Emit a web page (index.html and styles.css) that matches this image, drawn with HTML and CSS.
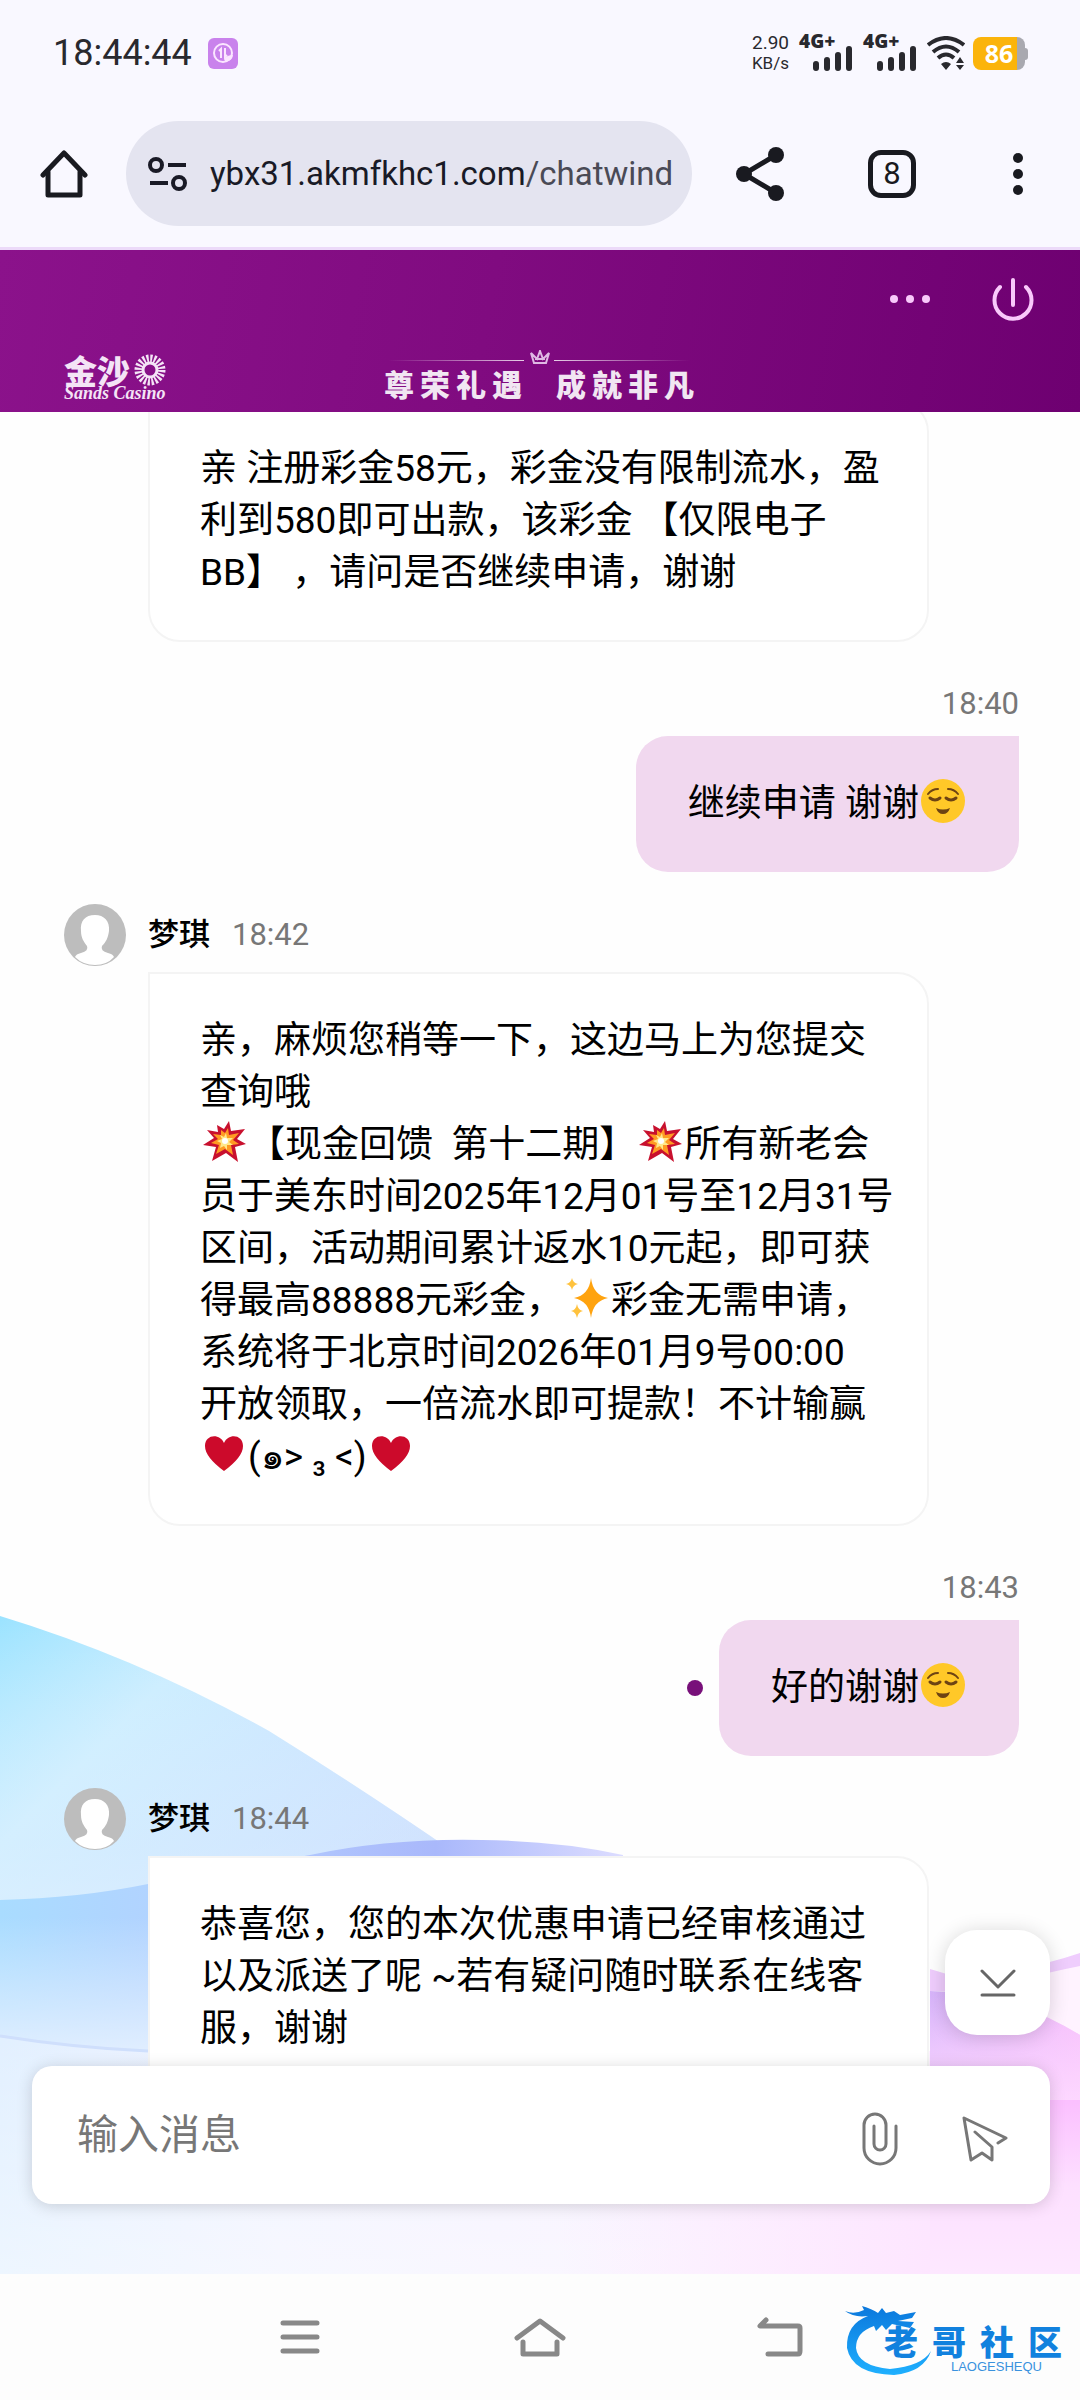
FILE: index.html
```html
<!DOCTYPE html>
<html lang="zh-CN">
<head>
<meta charset="utf-8">
<meta name="viewport" content="width=device-width, initial-scale=1">
<title>在线客服</title>
<link rel="stylesheet" href="styles.css">
</head>
<body>
<svg class="defs" width="0" height="0" aria-hidden="true">
  <symbol id="face" viewBox="0 0 46 46">
    <circle cx="23" cy="23" r="22" fill="#ffc828"/>
    <g fill="none" stroke="#6d4313" stroke-width="2" stroke-linecap="round">
      <path d="M8 16Q12 11 18 11M38 16Q34 11 28 11"/>
      <path d="M10 20Q15 24 20 20M26 20Q31 24 36 20" stroke-width="3"/>
    </g>
    <path d="M16 30Q23 33 30 30Q28 36 23 36Q18 36 16 30Z" fill="#6d4313"/>
  </symbol>
  <symbol id="boom" viewBox="0 0 46 46">
    <path d="M28 2L30 12L44 10L36 20L45 25L34 28L37 43L25 34L11 42L15 28L2 26L13 19L6 11L17 13L16 6L23 10Z" fill="#c8102e"/>
    <path d="M27 9L28 16L38 14L32 21L38 25L30 26L32 36L24 30L15 35L18 26L10 24L17 20L12 15L20 16L20 11L24 14Z" fill="#ff9a22"/>
    <path d="M25 14L26 19L32 19L28 23L32 26L26 26L26 31L23 27L19 29L20 24L16 22L21 20L19 16L23 18Z" fill="#ffe98a"/>
    <circle cx="24" cy="22" r="3" fill="#fff"/>
  </symbol>
  <symbol id="sparkles" viewBox="0 0 46 46">
    <path d="M27 3Q29 20 44 23Q29 26 27 43Q25 26 10 23Q25 20 27 3Z" fill="#ffa30f"/>
    <path d="M8 3Q9 8 14 9Q9 10 8 15Q7 10 2 9Q7 8 8 3ZM13 29Q14 35 19 36Q14 37 13 43Q12 37 7 36Q12 35 13 29Z" fill="#ffc23d"/>
  </symbol>
  <symbol id="heart" viewBox="0 0 46 46">
    <path d="M23 40Q4 26 4 15C4 3 19 2 23 12C27 2 42 3 42 15Q42 26 23 40Z" fill="#cc0a2b"/>
  </symbol>
  <symbol id="avatar" viewBox="0 0 63 63">
    <circle cx="32" cy="32" r="31" fill="#bdbdbd"/>
    <path d="M32 12C22 12 17 18 18 28C18 35 21 39 24 43Q26 48 18 50Q13 51 12 54Q20 62 32 62Q44 62 51 54Q50 51 45 50Q37 48 39 43C43 39 45 35 46 28C47 18 41 12 32 12Z" fill="#fff"/>
  </symbol>
  <symbol id="signal" viewBox="0 0 56 38">
    <g stroke="#29292e" stroke-width="6" stroke-linecap="round">
      <path d="M17 30V34M28 26V34M39 21V34M50 15V34"/>
    </g>
  </symbol>
</svg>

<div class="phone">
  <div class="statusbar">
    <span class="clock">18:44:44</span>
    <svg class="app-badge" viewBox="0 0 30 31">
      <rect width="30" height="31" rx="6" fill="#c982ec"/>
      <circle cx="15" cy="15" r="9" fill="none" stroke="#fbe6ff" stroke-width="2"/>
      <path d="M11 13L13 11V20M17 10V19L19 17" fill="none" stroke="#fbe6ff" stroke-width="2"/>
      <path d="M16 21Q19 17 25 17Q24 24 17 23Z" fill="#fbe6ff"/>
    </svg>
    <div class="speed"><span class="speed-value">2.90</span><span class="speed-unit">KB/s</span></div>
    <div class="cell"><b class="cell-type">4G+</b><svg class="cell-bars"><use href="#signal"/></svg></div>
    <div class="cell"><b class="cell-type">4G+</b><svg class="cell-bars"><use href="#signal"/></svg></div>
    <svg class="wifi" viewBox="0 0 38 34">
      <g fill="none" stroke="#29292e" stroke-width="4">
        <path d="M1 9Q19 -5 37 9M6 16Q19 5 32 16M11 22Q19 15 27 22"/>
      </g>
      <path d="M14 28Q19 24 24 28L19 34ZM29 27L33 21L37 27ZM29 29L33 34L37 29Z" fill="#29292e"/>
    </svg>
    <div class="battery"><b>86</b></div>
  </div>

  <div class="toolbar">
    <button class="tool home" aria-label="主页">
      <svg width="48" height="50" viewBox="0 0 48 50" fill="none" stroke="#191a20" stroke-width="5" stroke-linecap="round" stroke-linejoin="round">
        <path d="M3 26L24 4L45 26"/><path d="M8 23V46H40V23"/>
      </svg>
    </button>
    <button class="address">
      <svg class="tune" width="40" height="36" viewBox="0 0 40 36" fill="none" stroke="#191a26" stroke-width="4">
        <circle cx="8" cy="9" r="6"/><path d="M20 9H38"/><circle cx="31" cy="27" r="6"/><path d="M2 27H20"/>
      </svg>
      <span class="url">ybx31.akmfkhc1.com<span class="path">/chatwind</span></span>
    </button>
    <button class="tool share" aria-label="分享">
      <svg width="48" height="54" viewBox="0 0 48 54">
        <path d="M40 8L8 27L40 46" fill="none" stroke="#191a20" stroke-width="5"/>
        <g fill="#191a20"><circle cx="40" cy="8" r="8"/><circle cx="8" cy="27" r="8"/><circle cx="40" cy="46" r="8"/></g>
      </svg>
    </button>
    <button class="tabs" aria-label="标签页">8</button>
    <button class="tool more" aria-label="更多">
      <svg width="12" height="44" viewBox="0 0 12 44" fill="#191a20"><circle cx="6" cy="6" r="5"/><circle cx="6" cy="22" r="5"/><circle cx="6" cy="38" r="5"/></svg>
    </button>
  </div>

  <header class="banner">
    <div class="banner-actions">
      <button class="tool" aria-label="菜单">
        <svg width="40" height="10" viewBox="0 0 40 10" fill="#f9c9fb"><circle cx="4" cy="5" r="4"/><circle cx="20" cy="5" r="4"/><circle cx="36" cy="5" r="4"/></svg>
      </button>
      <button class="tool" aria-label="退出">
        <svg width="42" height="44" viewBox="0 0 42 44" fill="none" stroke="#f9c9fb" stroke-width="4" stroke-linecap="round"><path d="M21 3V28M8 10A18.500 18.500 0 1 0 34 10"/></svg>
      </button>
    </div>
    <div class="brandline">
      <div class="logo">
        <div class="logo-top">
          <span class="logo-zh">金沙</span>
          <svg width="32" height="32" viewBox="-16 -16 32 32" fill="none" stroke="#f4e4f6">
            <circle r="11" stroke-width="9" stroke-dasharray="2 1.450"/>
            <circle r="7" stroke-width="3"/>
          </svg>
        </div>
        <span class="logo-en">Sands Casino</span>
      </div>
      <div class="slogan">
        <svg class="slogan-rule" viewBox="0 0 312 14">
          <defs>
            <linearGradient id="ruleL"><stop offset="0" stop-color="#fff" stop-opacity="0"/><stop offset="1" stop-color="#fff" stop-opacity=".8"/></linearGradient>
            <linearGradient id="ruleR"><stop offset="0" stop-color="#fff" stop-opacity=".8"/><stop offset="1" stop-color="#fff" stop-opacity="0"/></linearGradient>
          </defs>
          <rect x="4" y="10" width="136" height="1" fill="url(#ruleL)"/>
          <rect x="170" y="10" width="136" height="1" fill="url(#ruleR)"/>
          <path d="M147 3L150 13H162L165 3L159 9L156 1L153 9ZM151 9H161" fill="none" stroke="#dfb9e4" stroke-width="2"/>
        </svg>
        <div class="slogan-text">
          <span>尊</span><span>荣</span><span>礼</span><span>遇</span>
          <span class="second">成</span><span>就</span><span>非</span><span>凡</span>
        </div>
      </div>
    </div>
  </header>

  <main class="chat">
    <svg class="waves" viewBox="0 0 1080 700" preserveAspectRatio="none" aria-hidden="true">
      <defs>
        <linearGradient id="w1" x1="0" y1="0" x2="1" y2="1"><stop offset="0" stop-color="#9be3ff"/><stop offset=".25" stop-color="#c8ecff"/><stop offset=".6" stop-color="#c4deff"/><stop offset="1" stop-color="#c3ccfb"/></linearGradient>
        <linearGradient id="fade" x1="0" y1="0" x2="0" y2="1"><stop offset="0" stop-color="#fff" stop-opacity="0"/><stop offset=".5" stop-color="#e6f3ff" stop-opacity=".4"/><stop offset="1" stop-color="#e3f2ff"/></linearGradient>
        <linearGradient id="w2" x1="0" y1="0" x2="1" y2="0"><stop offset="0" stop-color="#a9dcff"/><stop offset=".35" stop-color="#b5cfff"/><stop offset=".7" stop-color="#a9b8fb"/><stop offset="1" stop-color="#dcdcff"/></linearGradient>
        <linearGradient id="w2f" x1="0" y1="0" x2="0" y2="1"><stop offset=".1" stop-color="#e2efff" stop-opacity="0"/><stop offset=".9" stop-color="#e2efff"/></linearGradient>
        <linearGradient id="w3" x1="0" y1="0" x2="1" y2="0"><stop offset="0" stop-color="#e2f0ff"/><stop offset=".3" stop-color="#f1f3ff"/><stop offset="1" stop-color="#fdf0ff"/></linearGradient>
        <linearGradient id="w3f" x1="0" y1="0" x2="0" y2="1"><stop offset="0" stop-color="#fff" stop-opacity="0"/><stop offset="1" stop-color="#fff" stop-opacity=".4"/></linearGradient>
        <linearGradient id="p1" x1="0" y1="0" x2="1" y2="0"><stop offset="0" stop-color="#d7b4fb"/><stop offset="1" stop-color="#f6bdfc"/></linearGradient>
        <linearGradient id="p1f" x1="0" y1="0" x2="0" y2="1"><stop offset="0" stop-color="#fdd8ff" stop-opacity="0"/><stop offset="1" stop-color="#fdd8ff"/></linearGradient>
        <linearGradient id="p2" x1="0" y1="0" x2="0" y2="1"><stop offset="0" stop-color="#fbbfff"/><stop offset=".5" stop-color="#fde0ff"/><stop offset="1" stop-color="#fde8ff"/></linearGradient>
        <linearGradient id="p2x" x1="0" y1="0" x2="1" y2="0"><stop offset="0" stop-color="#fde6ff" stop-opacity="0"/><stop offset="1" stop-color="#fde6ff"/></linearGradient>
      </defs>
      <path d="M0 42Q138 84 269 157Q370 220 458 281V500H0Z" fill="url(#w1)"/>
      <path d="M0 42Q138 84 269 157Q370 220 458 281V500H0Z" fill="url(#fade)"/>
      <path d="M0 326Q80 324 148 310L310 281Q390 264 482 266Q560 267 623 281V500H0Z" fill="url(#w2)"/>
      <path d="M0 326H640V500H0Z" fill="url(#w2f)"/>
      <path d="M0 462Q76 474 148 477H930V700H0Z" fill="url(#w3)"/>
      <path d="M0 462Q76 474 148 477H930V700H0Z" fill="url(#w3f)"/>
      <path d="M0 462Q76 474 148 477" fill="none" stroke="#cfdffc" stroke-width="3"/>
      <path d="M930 395L960 404Q1030 396 1080 379V461Q1020 432 960 418L930 417Z" fill="#efcdfd"/>
      <path d="M975 417Q1040 400 1080 392V461Q1040 440 975 417Z" fill="#fff3ff"/>
      <path d="M930 417L985 420Q1040 436 1080 461V530H930Z" fill="url(#p1)"/>
      <path d="M930 417L985 420Q1040 436 1080 461V530H930Z" fill="url(#p1f)"/>
      <path d="M930 526H1080V700H930Z" fill="url(#p2)"/>
      <path d="M560 600H930V700H560Z" fill="url(#p2x)"/>
    </svg>

    <div class="messages">
      <article class="msg agent">
        <div class="bubble">亲 注册彩金58元，彩金没有限制流水，盈<br>利到580即可出款，该彩金 【仅限电子<br>BB】 ，请问是否继续申请，谢谢</div>
      </article>

      <article class="msg visitor">
        <time class="time">18:40</time>
        <div class="bubble-row"><div class="bubble">继续申请 谢谢<svg class="emoji"><use href="#face"/></svg></div></div>
      </article>

      <article class="msg agent">
        <div class="who"><svg class="avatar"><use href="#avatar"/></svg><span class="name">梦琪</span><time class="time">18:42</time></div>
        <div class="bubble">亲，麻烦您稍等一下，这边马上为您提交<br>查询哦<br><svg class="emoji"><use href="#boom"/></svg>【现金回馈&nbsp; 第十二期】<svg class="emoji"><use href="#boom"/></svg>所有新老会<br>员于美东时间2025年12月01号至12月31号<br>区间，活动期间累计返水10元起，即可获<br>得最高88888元彩金，<svg class="emoji"><use href="#sparkles"/></svg>彩金无需申请，<br>系统将于北京时间2026年01月9号00:00<br>开放领取，一倍流水即可提款！不计输赢<br><svg class="emoji"><use href="#heart"/></svg>(๑&gt; ₃ &lt;)<svg class="emoji"><use href="#heart"/></svg></div>
      </article>

      <article class="msg visitor">
        <time class="time">18:43</time>
        <div class="bubble-row"><i class="unread"></i><div class="bubble">好的谢谢<svg class="emoji"><use href="#face"/></svg></div></div>
      </article>

      <article class="msg agent">
        <div class="who"><svg class="avatar"><use href="#avatar"/></svg><span class="name">梦琪</span><time class="time">18:44</time></div>
        <div class="bubble">恭喜您，您的本次优惠申请已经审核通过<br>以及派送了呢 ~若有疑问随时联系在线客<br>服，谢谢</div>
      </article>
    </div>

    <form class="composer">
      <button type="button" class="to-bottom" aria-label="回到底部">
        <svg width="36" height="30" viewBox="0 0 36 30" fill="none" stroke="#666" stroke-width="3" stroke-linecap="round" stroke-linejoin="round"><path d="M2 3L18 19L34 3M2 27H34"/></svg>
      </button>
      <input class="field" type="text" placeholder="输入消息" aria-label="输入消息">
      <button type="button" class="tool attach" aria-label="附件">
        <svg width="36" height="54" viewBox="0 0 36 54" fill="none" stroke="#777" stroke-width="3" stroke-linecap="round"><path d="M34 14V36A16 16 0 0 1 2 36V13A11 11 0 0 1 24 13V32A6 6 0 0 1 12 32V14"/></svg>
      </button>
      <button type="submit" class="tool send" aria-label="发送">
        <svg width="46" height="47" viewBox="0 0 46 47" fill="none" stroke="#777" stroke-width="3" stroke-linecap="round" stroke-linejoin="round"><path d="M36 27L44 22L2 2L9 44L20 37L30 44V31L13 16"/></svg>
      </button>
    </form>
  </main>

  <nav class="navbar">
    <button class="tool" aria-label="最近任务"><svg width="52" height="40" viewBox="0 0 52 40" stroke="#888" stroke-width="5" stroke-linecap="round"><path d="M9 6H43M9 20H43M9 34H43"/></svg></button>
    <button class="tool" aria-label="主屏幕"><svg width="52" height="40" viewBox="0 0 52 40" fill="none" stroke="#888" stroke-width="5" stroke-linecap="round" stroke-linejoin="round"><path d="M3 21L26 4L49 21M9 25V37H43V25"/></svg></button>
    <button class="tool" aria-label="返回"><svg width="52" height="40" viewBox="0 0 52 40" fill="none" stroke="#888" stroke-width="5" stroke-linecap="round" stroke-linejoin="round"><path d="M12 3L6 9H44Q46 9 46 11V34Q46 37 44 37H14"/></svg></button>
    <div class="watermark">
      <svg class="dragon" viewBox="0 0 92 76">
        <defs><linearGradient id="dg" x1="0" y1="0" x2="0" y2="1"><stop offset="0" stop-color="#0b78dc"/><stop offset="1" stop-color="#1fb0ff"/></linearGradient></defs>
        <path d="M1 9Q10 13 20 8L18 4Q28 7 34 11L38 6L42 11L50 9L56 13L72 10L68 16L54 19L70 20L66 26L48 22L42 28L38 23L32 29L30 24Q12 30 12 46Q14 64 46 67Q78 64 87 49Q80 70 50 73Q8 72 3 46Q2 22 24 14Q10 16 1 9Z" fill="url(#dg)"/>
      </svg>
      <div class="wm-text">
        <div class="wm-zh"><span>老</span><span>哥</span><span>社</span><span>区</span></div>
        <span class="wm-en">LAOGESHEQU</span>
      </div>
    </div>
  </nav>
</div>
</body>
</html>
```
FILE: styles.css
```css
* { box-sizing: border-box; }

body {
  margin: 0;
  font-family: Roboto, "Noto Sans CJK SC", "Noto Sans", "DejaVu Sans", sans-serif;
  color: #000;
  background: #fdfdfd;
}

.defs { position: absolute; }

button {
  padding: 0;
  border: 0;
  background: none;
  font: inherit;
  color: inherit;
}

.tool { display: flex; align-items: center; justify-content: center; }

.phone {
  display: flex;
  flex-direction: column;
  height: 100vh;
  overflow: hidden;
}

/* status bar */
.statusbar {
  display: flex;
  align-items: center;
  height: 106px;
  padding: 0 52px 0 53px;
  background: #f9f8ff;
  color: #29292e;
}
.clock { font-size: 36px; line-height: 40px; }
.app-badge { width: 30px; height: 31px; margin-left: 16px; }
.speed {
  display: flex;
  flex-direction: column;
  align-items: center;
  margin-left: auto;
  margin-right: 10px;
  line-height: 20px;
}
.speed-value { font-size: 19px; }
.speed-unit { font-size: 17px; }
.cell { position: relative; width: 56px; height: 38px; margin-right: 8px; }
.cell-type {
  position: absolute;
  left: 0;
  top: 0;
  font-family: "Open Sans", sans-serif;
  font-size: 19px;
  line-height: 14px;
  font-weight: 800;
}
.cell-bars { width: 56px; height: 38px; }
.wifi { width: 38px; height: 34px; }
.battery {
  position: relative;
  display: flex;
  align-items: center;
  justify-content: center;
  width: 52px;
  height: 33px;
  margin: 0 3px 0 8px;
  border-radius: 8px;
  background: linear-gradient(90deg, #fbb40b 85%, #a9a9b0 85%);
  color: #fff;
  font-family: "Open Sans", sans-serif;
  font-size: 25px;
  line-height: 33px;
}
.battery::after {
  content: "";
  position: absolute;
  left: 100%;
  top: 11px;
  width: 3px;
  height: 12px;
  border-radius: 0 3px 3px 0;
  background: #a9a9b0;
}

/* browser toolbar */
.toolbar {
  display: flex;
  align-items: center;
  height: 144px;
  padding: 0 56px 6px 40px;
  border-bottom: 3px solid #ecdaf9;
  background: #f9f8ff;
}
.address {
  display: flex;
  align-items: center;
  flex: 1;
  min-width: 0;
  height: 105px;
  margin: 0 44px 0 38px;
  padding: 0 20px 0 22px;
  border-radius: 53px;
  background: #e4e4f0;
  color: #191a26;
}
.tune { flex: none; margin-right: 22px; }
.url {
  flex: 1;
  overflow: hidden;
  font-size: 33px;
  line-height: 48px;
  text-align: left;
  white-space: nowrap;
}
.path { color: #4a4a55; }
.tabs {
  width: 48px;
  height: 48px;
  margin: 0 96px 0 84px;
  border: 5px solid #191a20;
  border-radius: 13px;
  font-size: 31px;
  line-height: 38px;
  color: #191a20;
}

/* casino banner */
.banner {
  position: relative;
  z-index: 1;
  display: flex;
  flex-direction: column;
  justify-content: space-between;
  height: 162px;
  padding: 27px 46px 12px 64px;
  background: linear-gradient(100deg, #8b128b 0%, #800b80 45%, #6e0071 100%);
}
.banner-actions {
  display: flex;
  align-items: center;
  justify-content: flex-end;
  gap: 62px;
}
.brandline {
  display: grid;
  grid-template-columns: 1fr auto 1fr;
  align-items: end;
}
.logo { display: flex; flex-direction: column; color: #f4e4f6; }
.logo-top { display: flex; align-items: center; gap: 4px; }
.logo-zh {
  font-family: "Noto Sans CJK SC", sans-serif;
  font-size: 33px;
  line-height: 30px;
  font-weight: 900;
}
.logo-en {
  font-family: "Liberation Serif", serif;
  font-size: 18px;
  line-height: 14px;
  font-weight: 700;
  font-style: italic;
}
.slogan { display: flex; flex-direction: column; margin-left: -18px; }
.slogan-rule { width: 312px; height: 14px; }
.slogan-text {
  display: flex;
  gap: 6px;
  margin-top: 2px;
  color: #f1e6f2;
  font-family: "Noto Sans CJK SC", sans-serif;
  font-size: 30px;
  line-height: 34px;
  font-weight: 900;
}
.second { margin-left: 28px; }

/* conversation */
.chat {
  position: relative;
  display: flex;
  flex-direction: column;
  flex: 1;
  min-height: 0;
  padding-bottom: 70px;
  background: #fefefe;
}
.waves {
  position: absolute;
  left: 0;
  bottom: 0;
  width: 100%;
  height: 700px;
}
.messages {
  position: relative;
  flex: 1;
  min-height: 0;
  overflow: hidden;
  margin-top: -12px;
  padding: 0 61px 0 63px;
}
.msg { display: flex; flex-direction: column; }
.bubble {
  padding: 41px 50px;
  border-radius: 32px;
  font-size: 37px;
  line-height: 52px;
  white-space: nowrap;
}
.agent .bubble {
  margin-left: 85px;
  margin-right: 90px;
  border: 2px solid #f4f4f4;
  border-top-left-radius: 0;
  background: #fff;
}
.visitor { align-items: flex-end; padding: 42px 0 31px; }
.visitor .bubble {
  padding: 42px 52px;
  border-top-right-radius: 0;
  background: #f1d8ef;
}
.bubble-row { display: flex; align-items: center; gap: 16px; margin-top: 12px; }
.unread { width: 16px; height: 16px; border-radius: 50%; background: #78107a; }
.time { font-size: 31px; line-height: 40px; color: #777; }
.who { display: flex; align-items: center; height: 63px; margin-bottom: 6px; }
.avatar { width: 63px; height: 63px; margin-right: 22px; }
.name { margin-right: 22px; font-size: 31px; line-height: 40px; font-weight: 500; }
.emoji { width: 46px; height: 46px; margin: -16px 1px -8px; vertical-align: 0; }

/* composer */
.composer {
  position: relative;
  display: flex;
  align-items: center;
  height: 138px;
  margin: 0 30px 0 32px;
  padding: 0 42px 0 45px;
  border-radius: 20px;
  background: #fff;
  box-shadow: 0 2px 16px rgba(0, 0, 0, .16);
}
.field {
  flex: 1;
  min-width: 0;
  padding: 0;
  border: 0;
  outline: 0;
  background: none;
  font: inherit;
  font-size: 41px;
  line-height: 60px;
}
.field::placeholder { color: #777; opacity: 1; }
.attach { margin: 8px 64px 0 0; }
.send { margin-top: 8px; }
.to-bottom {
  position: absolute;
  right: 0;
  bottom: 169px;
  display: flex;
  align-items: center;
  justify-content: center;
  width: 105px;
  height: 105px;
  border-radius: 32px;
  background: #fff;
  box-shadow: 0 2px 20px rgba(0, 0, 0, .16);
}

/* system navigation */
.navbar {
  position: relative;
  display: flex;
  align-items: center;
  justify-content: center;
  gap: 188px;
  height: 126px;
  background: #fdfdfd;
}
.watermark {
  position: absolute;
  right: 18px;
  top: 28px;
  display: flex;
}
.dragon { width: 92px; height: 76px; margin-right: -52px; }
.wm-text { display: flex; flex-direction: column; padding-top: 20px; }
.wm-zh {
  display: flex;
  gap: 14px;
  font-family: "Noto Sans CJK SC", sans-serif;
  font-size: 34px;
  line-height: 38px;
  font-weight: 900;
  color: #1181de;
}
.wm-en {
  align-self: flex-end;
  margin-right: 20px;
  font-family: "Liberation Sans", sans-serif;
  font-size: 13px;
  line-height: 14px;
  color: #3a92de;
}
```
